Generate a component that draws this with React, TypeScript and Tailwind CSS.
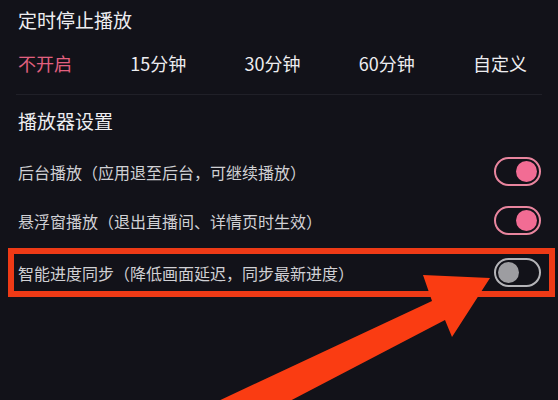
import React from "react";

const TIMERS = ["不开启", "15分钟", "30分钟", "60分钟", "自定义"];

function Toggle({ on }: { on: boolean }) {
  return on ? (
    <div className="w-[47px] h-[29px] rounded-full border-2 border-[#e8859e] flex items-center justify-end px-[2px] shrink-0">
      <div className="w-[21px] h-[21px] rounded-full bg-[#f26c94]" />
    </div>
  ) : (
    <div className="w-[47px] h-[29px] rounded-full border-2 border-[#b4b4b8] flex items-center justify-start px-[2px] shrink-0">
      <div className="w-[21px] h-[21px] rounded-full bg-[#9d9da1]" />
    </div>
  );
}

export default function App() {
  return (
    <div
      className="relative w-[558px] h-[400px] overflow-hidden bg-[#121219] text-[#ededf0] [text-spacing-trim:space-all]"
      style={{ fontFamily: '"Noto Sans CJK SC", "Noto Sans", sans-serif' }}
    >
      {/* Timer section */}
      <div className="h-[40px] flex items-center pl-[18px] text-[19px]">定时停止播放</div>
      <div className="h-[46px] flex items-center justify-between pl-[18px] pr-[31px] text-[18px]">
        {TIMERS.map((t, i) => (
          <span key={t} className={i === 0 ? "text-[#e2607f]" : "text-[#ededf0]"}>
            {t}
          </span>
        ))}
      </div>
      <div className="h-[8px]" />
      <div className="h-px mx-[16px] bg-[#202028]" />

      {/* Player settings */}
      <div className="h-[52px] flex items-center pl-[18px] text-[19px]">播放器设置</div>
      <div className="h-[49px] flex items-center justify-between pl-[18px] pr-[17px]">
        <span className="text-[16px] text-[#d0d0d4]">后台播放（应用退至后台，可继续播放）</span>
        <Toggle on />
      </div>
      <div className="h-[49px] flex items-center justify-between pl-[18px] pr-[17px]">
        <span className="text-[16px] text-[#d0d0d4]">悬浮窗播放（退出直播间、详情页时生效）</span>
        <Toggle on />
      </div>
      <div className="mt-[3px] ml-[8px] mr-[3px] h-[49px] border-[6px] border-[#ee3a16] flex items-center justify-between pl-[4px] pr-[8px]">
        <span className="text-[16px] text-[#d0d0d4]">智能进度同步（降低画面延迟，同步最新进度）</span>
        <Toggle on={false} />
      </div>

      {/* Annotation arrow */}
      <svg className="absolute inset-0 pointer-events-none" width="558" height="400" viewBox="0 0 558 400">
        <polygon
          points="214,403 432,301 423,275 490,278 452,337 445,320 286,403"
          fill="#fa3c12"
        />
      </svg>
    </div>
  );
}
